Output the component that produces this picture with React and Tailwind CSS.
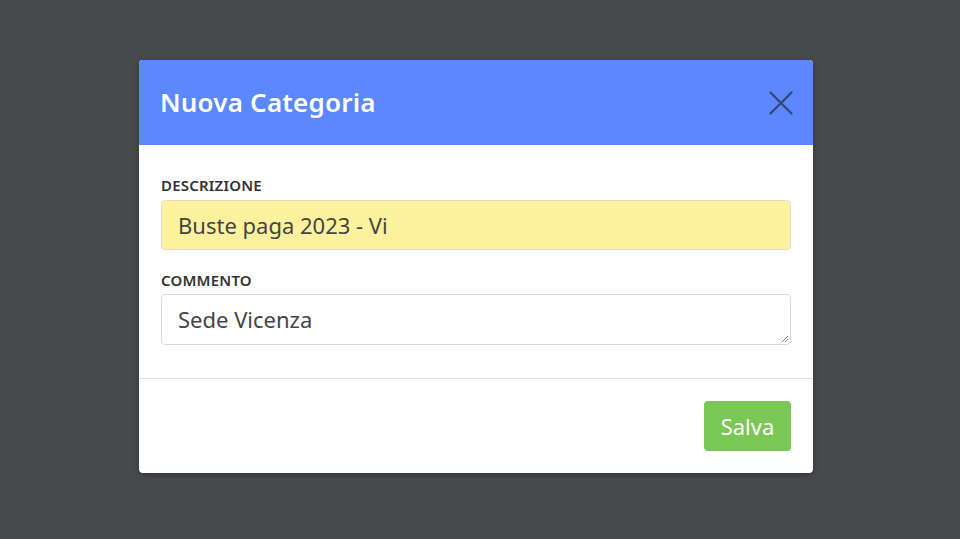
export default function App() {
  return (
    <div className="w-[960px] h-[539px] bg-[#48494b] flex justify-start pl-[139px] pt-[60px]" style={{ fontFamily: '"Noto Sans", "Open Sans", sans-serif' }}>
      <div className="w-[674px] h-[413px] bg-white rounded-[4px] overflow-hidden flex flex-col shadow-[0_2px_6px_rgba(0,0,0,0.3)]">
        <div className="h-[85px] bg-[#5b87ff] flex items-center justify-between pl-[21px] pr-[20px]">
          <h1 className="text-white text-[26px] font-semibold leading-none tracking-[0.2px] -mt-[2px]">Nuova Categoria</h1>
          <svg width="24" height="24" viewBox="0 0 24 24">
            <path d="M1.5 1.5 L22.5 22.5 M22.5 1.5 L1.5 22.5" stroke="#35476e" strokeWidth="2.2" strokeLinecap="round" />
          </svg>
        </div>
        <div className="px-[22px] pt-[30px] pb-[33px] border-b border-[#e3e5e8]">
          <div className="text-[15px] leading-[20px] font-semibold text-[#333] tracking-[0.2px] mb-[5px]">DESCRIZIONE</div>
          <div className="h-[50px] bg-[#fff29e] border border-[#dcdcc8] rounded-[4px] flex items-center px-[16px] text-[22px] text-[#454545]">Buste paga 2023 - Vi</div>
          <div className="mt-[20px] text-[15px] leading-[20px] font-semibold text-[#333] tracking-[0.2px] mb-[4px]">COMMENTO</div>
          <div className="relative h-[51px] bg-white border border-[#d7dbe0] rounded-[4px] flex items-center px-[16px] text-[22px] text-[#454545]">
            Sede Vicenza
            <svg width="8" height="8" viewBox="0 0 8 8" className="absolute right-[1px] bottom-[1px]">
              <path d="M7 1 L1 7 M7 4 L4 7" stroke="#777" strokeWidth="1" />
            </svg>
          </div>
        </div>
        <div className="flex justify-end px-[22px] pt-[22px]">
          <button className="w-[87px] h-[50px] bg-[#7ac756] rounded-[4px] text-white text-[22px]">Salva</button>
        </div>
      </div>
    </div>
  );
}
